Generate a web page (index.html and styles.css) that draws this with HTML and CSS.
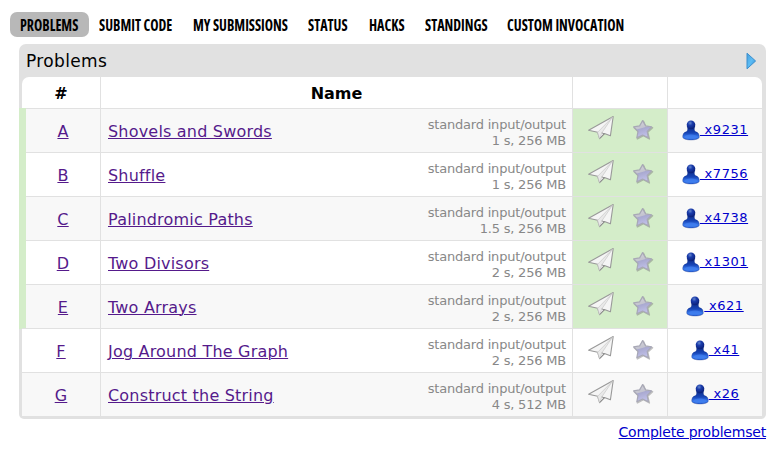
FILE: index.html
```html
<!DOCTYPE html>
<html lang="en">
<head>
<meta charset="utf-8">
<title>Problems</title>
<link rel="stylesheet" href="styles.css">
</head>
<body>
<svg class="defs" width="0" height="0" aria-hidden="true">
  <defs>
    <linearGradient id="starFill" x1="0" y1="0" x2="0.3" y2="1"><stop offset="0" stop-color="#d4d4d8"/><stop offset=".5" stop-color="#c4c4d0"/><stop offset=".55" stop-color="#a9a9d0"/><stop offset="1" stop-color="#c0c0e8"/></linearGradient>
    <linearGradient id="userBody" x1="0" y1="0" x2="0" y2="1"><stop offset="0" stop-color="#0b2680"/><stop offset=".5" stop-color="#1746b8"/><stop offset=".8" stop-color="#3c7df0"/><stop offset="1" stop-color="#1d50c4"/></linearGradient>
    <radialGradient id="userHead" cx=".4" cy=".3" r=".7"><stop offset="0" stop-color="#6688cc"/><stop offset=".4" stop-color="#1a3cac"/><stop offset="1" stop-color="#0a2078"/></radialGradient>
    <linearGradient id="arrowFill" x1="0" y1="0" x2="1" y2="1"><stop offset="0" stop-color="#4aa0dc"/><stop offset=".5" stop-color="#5cbcf4"/><stop offset="1" stop-color="#2c88d4"/></linearGradient>
    <symbol id="plane" viewBox="0 0 28 26">
      <path d="M1.6 15.2 26.2 1.5 23.4 20.8 17.4 18.6 12.6 23.6 10.6 17.3Z" fill="#f5f5f5" stroke="#999" stroke-width="1.1" stroke-linejoin="round"/>
      <path d="M10.6 17.3 25.6 2 14.8 17.9 12.6 23.6Z" fill="#e9e9e9" stroke="#c8c8c8" stroke-width=".7"/>
      <path d="M14.8 17.9 17.4 18.8 12.8 23.4" fill="none" stroke="#888" stroke-width=".9"/>
    </symbol>
    <symbol id="star" viewBox="0 0 22 22">
      <path d="M11.5 2.2 14 8.2 20.6 8.8 15.7 13.3 17.4 20 11.5 16.7 5.4 20 6.8 13.3 2.2 8.8 8.6 8.2Z" fill="#777" opacity=".45" stroke="#777" stroke-width="1.4" stroke-linejoin="round"/>
      <path d="M10.6 1.6 13.6 6.9 19.6 7.9 15.2 12.3 16.4 18.8 10.6 16 4.8 18.8 6 12.3 1.6 7.9 7.6 6.9Z" fill="url(#starFill)" stroke="#a8a8b6" stroke-width="1.2" stroke-linejoin="round"/>
    </symbol>
    <symbol id="user" viewBox="0 0 18 21">
      <path d="M5.2 6h7.6C12.3 8.5 12 10.5 13.4 11.6 16.5 12.4 17.3 14.6 17.3 17 17.3 21 .7 21 .7 17 .7 14.6 1.5 12.4 4.6 11.6 6 10.5 5.7 8.5 5.2 6Z" fill="url(#userBody)" stroke="#102d80" stroke-opacity=".5" stroke-width=".6"/>
      <ellipse cx="9" cy="4.8" rx="4.3" ry="4.4" fill="url(#userHead)"/>
      <ellipse cx="9" cy="17" rx="6.4" ry="2.5" fill="#4280f0" opacity=".7"/>
    </symbol>
  </defs>
</svg>
<nav class="menu">
  <a class="tab problems current"><span>PROBLEMS</span></a>
  <a class="tab submit"><span>SUBMIT CODE</span></a>
  <a class="tab mine"><span>MY SUBMISSIONS</span></a>
  <a class="tab status"><span>STATUS</span></a>
  <a class="tab hacks"><span>HACKS</span></a>
  <a class="tab standings"><span>STANDINGS</span></a>
  <a class="tab invocation"><span>CUSTOM INVOCATION</span></a>
</nav>
<main class="panel">
  <header class="caption"><span>Problems</span><svg class="arrow" viewBox="0 0 11 18"><path d="M1 1.2 9.6 9 1 16.8Z" fill="url(#arrowFill)" stroke="#3b8fce" stroke-width="1"/></svg></header>
  <div class="table">
    <div class="row head"><div>#</div><div>Name</div><div></div><div></div></div>
    <div class="row odd solved"><div class="id"><a>A</a></div><div class="name"><a>Shovels and Swords</a><p>standard input/output<br>1 s, 256 MB</p></div><div class="act"><svg class="plane"><use href="#plane"/></svg><svg class="star"><use href="#star"/></svg></div><div class="count"><svg class="user"><use href="#user"/></svg><a>&nbsp;x9231</a></div></div>
    <div class="row solved"><div class="id"><a>B</a></div><div class="name"><a>Shuffle</a><p>standard input/output<br>1 s, 256 MB</p></div><div class="act"><svg class="plane"><use href="#plane"/></svg><svg class="star"><use href="#star"/></svg></div><div class="count"><svg class="user"><use href="#user"/></svg><a>&nbsp;x7756</a></div></div>
    <div class="row odd solved"><div class="id"><a>C</a></div><div class="name"><a>Palindromic Paths</a><p>standard input/output<br>1.5 s, 256 MB</p></div><div class="act"><svg class="plane"><use href="#plane"/></svg><svg class="star"><use href="#star"/></svg></div><div class="count"><svg class="user"><use href="#user"/></svg><a>&nbsp;x4738</a></div></div>
    <div class="row solved"><div class="id"><a>D</a></div><div class="name"><a>Two Divisors</a><p>standard input/output<br>2 s, 256 MB</p></div><div class="act"><svg class="plane"><use href="#plane"/></svg><svg class="star"><use href="#star"/></svg></div><div class="count"><svg class="user"><use href="#user"/></svg><a>&nbsp;x1301</a></div></div>
    <div class="row odd solved"><div class="id"><a>E</a></div><div class="name"><a>Two Arrays</a><p>standard input/output<br>2 s, 256 MB</p></div><div class="act"><svg class="plane"><use href="#plane"/></svg><svg class="star"><use href="#star"/></svg></div><div class="count"><svg class="user"><use href="#user"/></svg><a>&nbsp;x621</a></div></div>
    <div class="row"><div class="id"><a>F</a></div><div class="name"><a>Jog Around The Graph</a><p>standard input/output<br>2 s, 256 MB</p></div><div class="act"><svg class="plane"><use href="#plane"/></svg><svg class="star"><use href="#star"/></svg></div><div class="count"><svg class="user"><use href="#user"/></svg><a>&nbsp;x41</a></div></div>
    <div class="row odd"><div class="id"><a>G</a></div><div class="name"><a>Construct the String</a><p>standard input/output<br>4 s, 512 MB</p></div><div class="act"><svg class="plane"><use href="#plane"/></svg><svg class="star"><use href="#star"/></svg></div><div class="count"><svg class="user"><use href="#user"/></svg><a>&nbsp;x26</a></div></div>
  </div>
</main>
<footer><a>Complete problemset</a></footer>
</body>
</html>
```
FILE: styles.css
```css
* { box-sizing: border-box; }
body { margin: 0; padding: 12px 10px 0; height: 461px; overflow: hidden; background: #fff; color: #000; font: 16px/20px "DejaVu Sans", sans-serif; }
.defs { display: block; height: 0; }
.menu { display: flex; height: 25px; }
.tab { flex: none; height: 25px; padding-left: 10px; border-radius: 7px; font: bold 16px/27px "Open Sans", sans-serif; font-stretch: 75%; white-space: nowrap; }
.tab span { display: inline-block; transform: scaleX(.875); transform-origin: left; }
.current { background: #b8b8b8; }
.problems { width: 79px; }
.submit { width: 94px; }
.mine { width: 115px; }
.status { width: 61px; }
.hacks { width: 56px; }
.standings { width: 82px; }
.invocation { width: 136px; }
.panel { width: 747px; margin: 7px 0 0 9px; padding: 0 4px 3px 3px; border-radius: 7px 7px 5px 5px; background: #e1e1e1; }
.caption { display: flex; justify-content: space-between; height: 33px; padding: 7px 5px 0 4px; font-size: 17px; letter-spacing: .35px; }
.arrow { width: 11px; height: 18px; margin-top: 1px; }
.table { background: #fff; border-radius: 7px 7px 0 0; }
.row { position: relative; display: grid; grid-template: 43px / 78px 472px 95px 95px; height: 44px; border-top: 1px solid #e1e1e1; }
.row > div + div { border-left: 1px solid #e1e1e1; }
.row.head { grid-template-rows: 31px; height: 31px; border-top: 0; font-weight: bold; line-height: 33px; text-align: center; }
.odd { background: #f8f8f8; }
.solved::before { content: ""; position: absolute; left: -3px; top: -1px; width: 7px; height: 45px; background: #d4edc9; }
.id { line-height: 45px; text-align: center; }
.solved .id { padding-left: 4px; }
.id a, .name a { color: #551a8b; text-decoration: underline 1px; letter-spacing: .2px; }
.name { display: flex; justify-content: space-between; padding: 0 6px 0 7px; line-height: 45px; }
.name p { margin: 8px 0 0; color: #888; font-size: 13px; line-height: 16px; letter-spacing: -.2px; text-align: right; }
.act { display: flex; padding: 6px 0 0 14px; }
.solved .act { background: #d4edc9; }
.plane { width: 28px; height: 26px; }
.star { width: 22px; height: 22px; margin: 4px 0 0 17px; }
.count { display: flex; justify-content: center; line-height: 42px; font-size: 13px; letter-spacing: .55px; }
.user { width: 18px; height: 21px; margin-top: 11px; }
.count a, footer a { color: #0000cc; text-decoration: underline 1px; }
footer { margin-top: 3px; text-align: right; font-size: 14px; letter-spacing: -.2px; }
```
